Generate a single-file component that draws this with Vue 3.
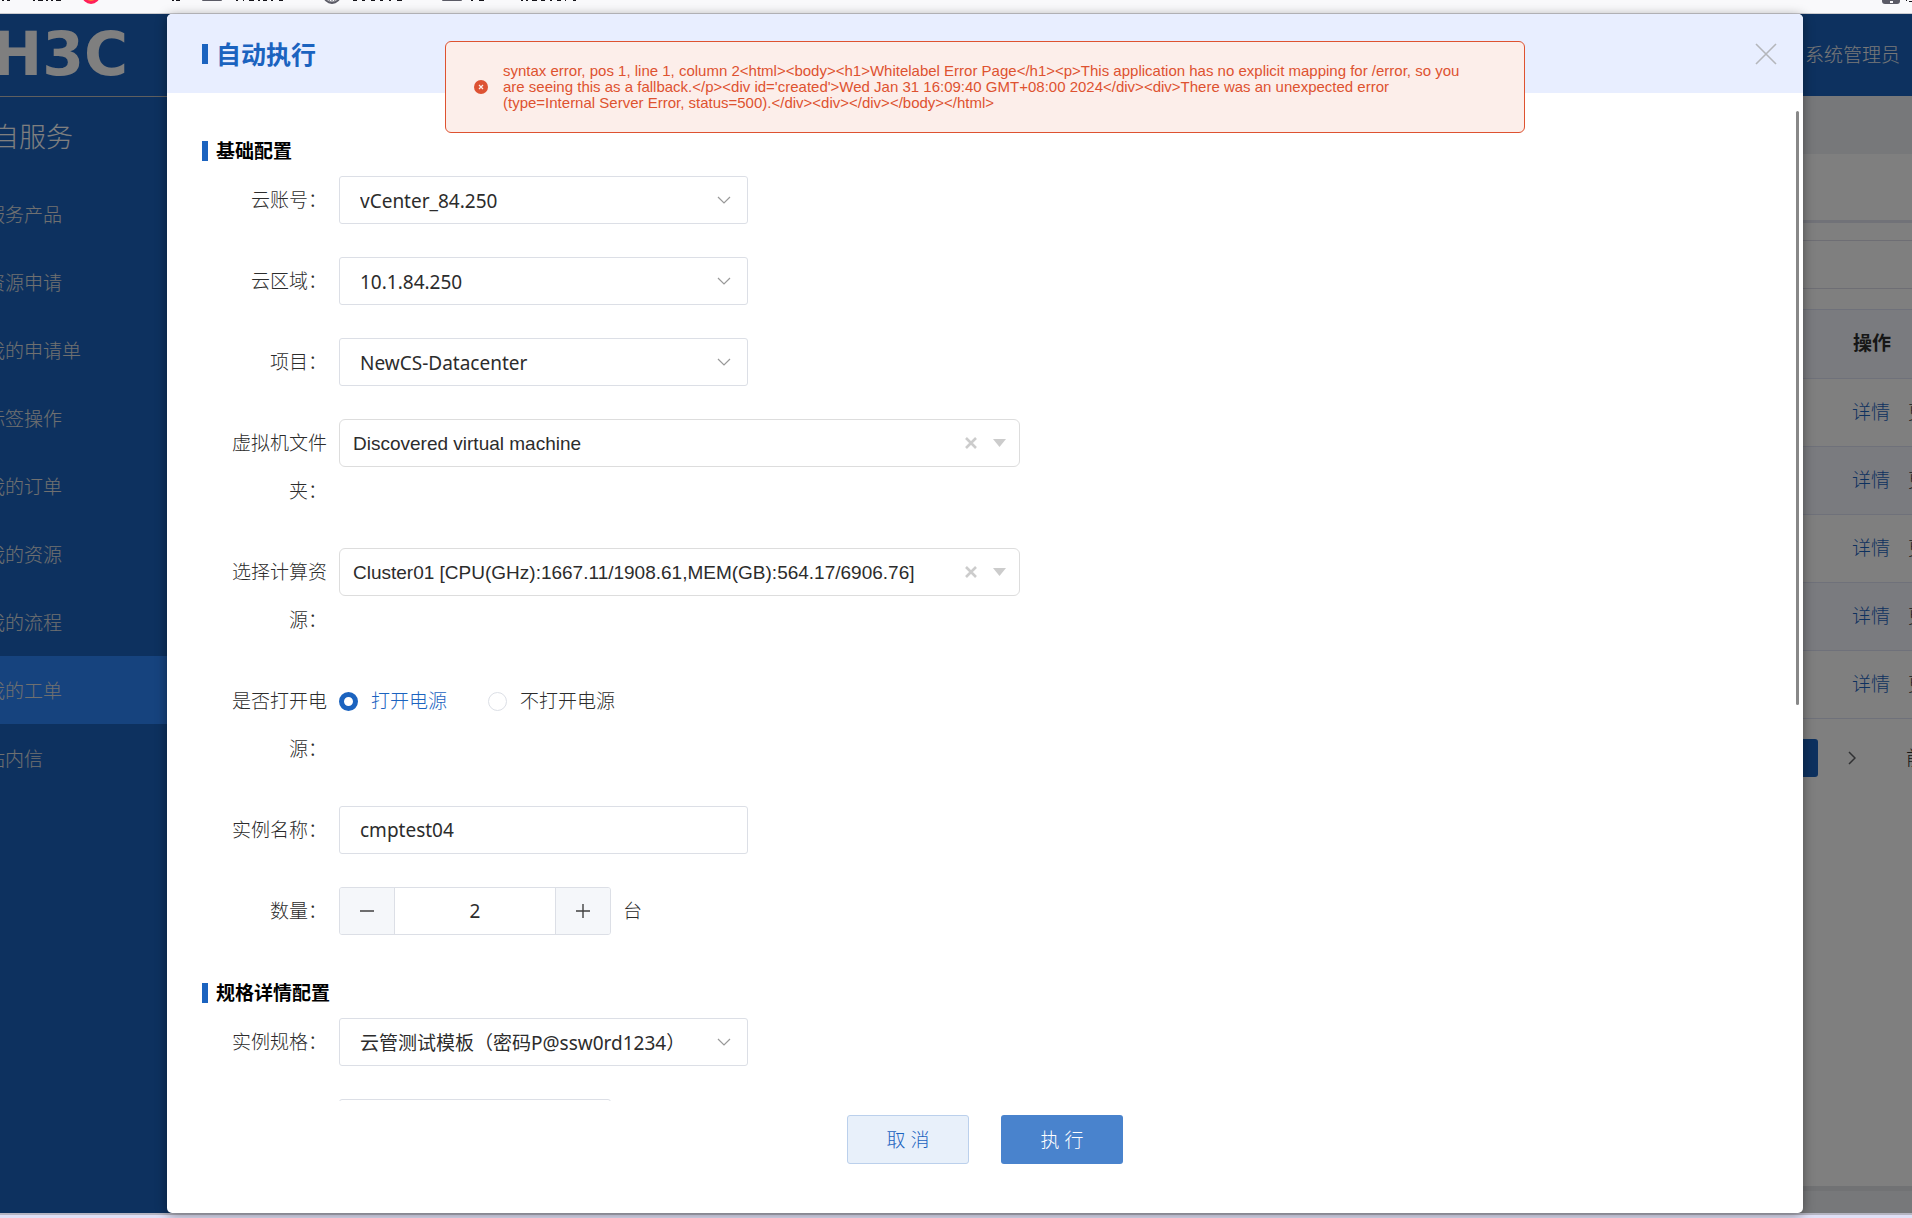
<script setup>
import { ref } from 'vue'

const menu = ['服务产品', '资源申请', '我的申请单', '标签操作', '我的订单', '我的资源', '我的流程', '我的工单', '站内信']
const activeMenu = '我的工单'
const rows = [1, 2, 3, 4, 5]

const cloudSelects = [
  { id: 'account', label: '云账号：', value: 'vCenter_84.250' },
  { id: 'region', label: '云区域：', value: '10.1.84.250' },
  { id: 'project', label: '项目：', value: 'NewCS-Datacenter' },
]
const treeSelects = [
  { id: 'folder', label: '虚拟机文件夹：', value: 'Discovered virtual machine' },
  { id: 'compute', label: '选择计算资源：', value: 'Cluster01 [CPU(GHz):1667.11/1908.61,MEM(GB):564.17/6906.76]' },
]
const spec = '云管测试模板（密码P@ssw0rd1234）'
const power = ref('on')
const name = ref('cmptest04')
const count = ref(2)
const errorText = [
  'syntax error, pos 1, line 1, column 2<html><body><h1>Whitelabel Error Page</h1><p>This application has no explicit mapping for /error, so you',
  "are seeing this as a fallback.</p><div id='created'>Wed Jan 31 16:09:40 GMT+08:00 2024</div><div>There was an unexpected error",
  '(type=Internal Server Error, status=500).</div><div></div></body></html>',
].join('\n')
</script>

<template>
  <div class="screen">
    <div class="bookmarks">
      <svg class="marks" width="600" height="13" viewBox="0 0 600 13" aria-hidden="true">
        <circle cx="91" cy="-5" r="9" fill="#ff1f5a" />
        <circle cx="91" cy="-5" r="6" fill="#ff7a2e" />
        <g fill="#5b5b66">
          <rect x="202" y="-4" width="20" height="5" rx="1" />
          <rect x="442" y="-4" width="20" height="5" rx="1" />
        </g>
        <circle cx="332" cy="-5" r="8" fill="none" stroke="#5b5b66" stroke-width="2" />
        <path d="M332-12V3M328-2Q329 2 332 3Q335 2 336-2M325-1H339" fill="none" stroke="#5b5b66" />
        <path
          d="M2 0.5h2M7 0.5h3M33 0.5h2M38 0.5h5M46 0.5h2M51 0.5h2M56 0.5h5M172 0.5h2M176 0.5h4M236 0.5h2M243 0.5h1M249 0.5h5M258 0.5h2M263 0.5h4M271 0.5h2M279 0.5h4M353 0.5h4M362 0.5h3M371 0.5h4M380 0.5h3M389 0.5h2M397 0.5h5M471 0.5h2M479 0.5h5M521 0.5h2M526 0.5h2M532 0.5h5M541 0.5h4M550 0.5h2M557 0.5h4M565 0.5h1M573 0.5h3"
          stroke="#15141a"
        />
      </svg>
      <svg width="30" height="13" viewBox="0 0 30 13" aria-hidden="true">
        <rect x="0" y="-8" width="18" height="12" rx="3" fill="#5b5b66" />
        <rect x="8" y="1" width="3" height="2" fill="#f9f9fb" />
        <path d="M24 0.5h1M27 1.5h3" stroke="#15141a" />
      </svg>
    </div>

    <div class="viewport">
      <aside class="sidebar">
        <div class="logo">H3C</div>
        <nav>
          <h2>自服务</h2>
          <a v-for="m in menu" :key="m" href="#" :class="{ active: m === activeMenu }">{{ m }}</a>
        </nav>
      </aside>

      <main class="page">
        <header class="topbar">系统管理员</header>
        <div class="crumbs"></div>
        <div class="tabs"></div>
        <div class="gap"></div>
        <div class="filters"></div>
        <div class="gap tall"></div>
        <table class="orders">
          <thead>
            <tr><th>操作</th></tr>
          </thead>
          <tbody>
            <tr v-for="r in rows" :key="r">
              <td><a href="#">详情</a><a href="#" class="more">更多</a></td>
            </tr>
          </tbody>
        </table>
        <div class="pager">
          <button type="button" class="current" aria-label="1"></button>
          <svg width="8" height="14" viewBox="0 0 8 14" aria-hidden="true"><path d="M1 1l6 6-6 6" fill="none" stroke="#606266" stroke-width="1.5" /></svg>
          <span>前往</span>
        </div>
        <div class="page-foot"></div>
      </main>

      <div class="overlay">
        <section class="dialog" role="dialog" aria-labelledby="dialog-title">
          <header class="dialog-head">
            <h1 id="dialog-title">自动执行</h1>
            <button type="button" class="close" aria-label="关闭">
              <svg width="22" height="22" viewBox="0 0 22 22" aria-hidden="true"><path d="M1 1l20 20M21 1L1 21" stroke="#b4b6bb" stroke-width="1.6" /></svg>
            </button>
          </header>

          <form class="dialog-body" @submit.prevent>
            <h3>基础配置</h3>
            <div v-for="f in cloudSelects" :key="f.id" class="row">
              <label :for="f.id">{{ f.label }}</label>
              <div class="field">
                <select :id="f.id"><option>{{ f.value }}</option></select>
                <svg class="arrow" width="14" height="9" viewBox="0 0 14 9" aria-hidden="true"><path d="M1 1l6 6 6-6" fill="none" stroke="#999" stroke-width="1.2" /></svg>
              </div>
            </div>
            <div v-for="f in treeSelects" :key="f.id" class="row">
              <label :for="f.id">{{ f.label }}</label>
              <div class="field wide">
                <select :id="f.id"><option>{{ f.value }}</option></select>
                <div class="tools">
                  <button type="button" aria-label="清除">
                    <svg width="12" height="12" viewBox="0 0 12 12" aria-hidden="true"><path d="M1 1l10 10M11 1L1 11" stroke="#ccc" stroke-width="2.6" /></svg>
                  </button>
                  <svg width="13" height="8" viewBox="0 0 13 8" aria-hidden="true"><path d="M0 0h13L6.500 8z" fill="#ccc" /></svg>
                </div>
              </div>
            </div>
            <div class="row" role="radiogroup" aria-labelledby="power-label">
              <span id="power-label" class="label">是否打开电源：</span>
              <div class="radios">
                <label class="radio"><input v-model="power" type="radio" name="power" value="on" /><span>打开电源</span></label>
                <label class="radio"><input v-model="power" type="radio" name="power" value="off" /><span>不打开电源</span></label>
              </div>
            </div>
            <div class="row">
              <label for="instance">实例名称：</label>
              <div class="field"><input id="instance" v-model="name" type="text" /></div>
            </div>
            <div class="row">
              <label for="count">数量：</label>
              <div class="stepper">
                <button type="button" aria-label="减少" @click="count--">
                  <svg width="14" height="14" viewBox="0 0 14 14" aria-hidden="true"><path d="M0 7h14" stroke="#404040" stroke-width="1.4" /></svg>
                </button>
                <input id="count" v-model="count" type="text" />
                <button type="button" aria-label="增加" @click="count++">
                  <svg width="14" height="14" viewBox="0 0 14 14" aria-hidden="true"><path d="M0 7h14M7 0v14" stroke="#404040" stroke-width="1.4" /></svg>
                </button>
              </div>
              <span class="unit">台</span>
            </div>

            <h3 class="second">规格详情配置</h3>
            <div class="row">
              <label for="spec">实例规格：</label>
              <div class="field">
                <select id="spec"><option>{{ spec }}</option></select>
                <svg class="arrow" width="14" height="9" viewBox="0 0 14 9" aria-hidden="true"><path d="M1 1l6 6 6-6" fill="none" stroke="#999" stroke-width="1.2" /></svg>
              </div>
            </div>
            <div class="row">
              <span class="label"></span>
              <div class="stepper"><input type="text" aria-label="数值" /></div>
            </div>
            <div class="thumb"></div>
          </form>

          <footer class="dialog-foot">
            <button type="button" class="cancel">取 消</button>
            <button type="button" class="run">执 行</button>
          </footer>
        </section>
      </div>

      <div class="alert" role="alert">
        <svg width="14" height="14" viewBox="0 0 14 14" aria-hidden="true">
          <circle cx="7" cy="7" r="7" fill="#dd5233" />
          <path d="M5 5l4 4M9 5L5 9" stroke="#fceeea" stroke-width="1.2" />
        </svg>
        <p>{{ errorText }}</p>
      </div>
    </div>
    <div class="taskbar"></div>
  </div>
</template>

<style>
body {
  overflow: hidden;
}
</style>

<style scoped>
* {
  box-sizing: border-box;
}
.screen {
  display: flex;
  flex-direction: column;
  height: 100vh;
  overflow: hidden;
  font: 300 19px/48px "Noto Sans", "Noto Sans CJK SC", sans-serif;
  color: #2c2c2c;
}
h1, h2, h3, p {
  margin: 0;
}
a {
  text-decoration: none;
}
button, input, select {
  font: inherit;
  color: inherit;
  margin: 0;
  padding: 0;
  border: 0;
  background: none;
}
svg {
  display: block;
  flex: none;
}

.bookmarks {
  display: flex;
  justify-content: space-between;
  flex: none;
  height: 14px;
  background: #f9f9fb;
  border-bottom: 1px solid #ccccd0;
}
.viewport {
  position: relative;
  display: flex;
  flex: 1;
  min-height: 0;
  background: #fff;
}
.taskbar {
  flex: none;
  height: 5px;
  background: #e0e0f6;
  border-top: 2px solid #b5b5c2;
}

/* The page is scrolled sideways, so the sidebar starts left of the window. */
.sidebar {
  flex: none;
  width: 240px;
  margin-left: -40px;
  background: #1b63bf;
  color: #fff;
}
.logo {
  height: 83px;
  padding-left: 32px;
  border-bottom: 1px solid #bebebe;
  font: 700 60px/80px "DejaVu Sans", sans-serif;
}
.sidebar h2 {
  height: 83px;
  padding-left: 32px;
  font-size: 27px;
  font-weight: 300;
  line-height: 80px;
}
.sidebar a {
  display: block;
  height: 68px;
  padding-left: 26px;
  line-height: 70px;
  color: #e0e0e0;
}
.sidebar a.active {
  background: #2c86fc;
}

.page {
  display: flex;
  flex-direction: column;
  flex: 1;
}
.topbar {
  height: 82px;
  padding-right: 12px;
  background: #1b63bf;
  color: #f0f0f0;
  line-height: 82px;
  text-align: right;
}
.crumbs {
  height: 58px;
  background: #eef0f4;
}
.tabs {
  height: 69px;
  border-bottom: 3px solid #e2e4f0;
}
.gap {
  height: 18px;
  border-bottom: 1px solid #dcdce8;
}
.gap.tall {
  height: 20px;
  border: 0;
}
.filters {
  height: 48px;
  border-bottom: 1px solid #dcdce8;
}
.orders {
  width: 100%;
  border-collapse: collapse;
}
.orders th {
  height: 69px;
  padding: 0 21px 2px 0;
  background: #f5f7ff;
  border-top: 1px solid #dfe3f4;
  border-bottom: 1px solid #dfe3f4;
  font-weight: 700;
  text-align: right;
}
.orders td {
  height: 68px;
  padding: 0 1px 2px 0;
  border-bottom: 1px solid #dfe3f4;
  text-align: right;
}
.orders tr:nth-child(even) td {
  background: #f5f7ff;
}
.orders td a {
  color: #1b63bf;
}
.orders td .more {
  margin: 0 -35px 0 18px;
  color: #3c3c3c;
}
.pager {
  display: flex;
  align-items: center;
  justify-content: flex-end;
  height: 78px;
  margin-right: -32px;
}
.pager .current {
  width: 38px;
  height: 38px;
  margin-right: 30px;
  border-radius: 3px;
  background: #1b63bf;
}
.pager span {
  margin-left: 50px;
}
.page-foot {
  height: 27px;
  margin-top: auto;
  border-top: 5px solid #e2e4e8;
  background: #eef0f4;
}

.overlay {
  position: absolute;
  inset: 0;
  display: flex;
  padding: 0 109px 0 167px;
  background: rgba(0, 0, 0, 0.5);
}
.dialog {
  display: flex;
  flex-direction: column;
  flex: 1;
  min-width: 0;
  overflow: hidden;
  border-radius: 5px;
  background: #fff;
  box-shadow: 0 2px 12px rgba(0, 0, 0, 0.4);
}
.dialog-head {
  display: flex;
  align-items: center;
  justify-content: space-between;
  flex: none;
  height: 79px;
  padding: 0 26px 0 35px;
  background: #e8eeff;
}
.dialog-head h1 {
  padding-left: 8px;
  border-left: 6px solid #1b63bf;
  color: #1b63bf;
  font-size: 25px;
  font-weight: 700;
  line-height: 20px;
}
.dialog-body {
  position: relative;
  flex: 1;
  min-height: 0;
  overflow: hidden;
  margin-top: 18px;
  padding: 30px 35px 0;
}
h3 {
  height: 20px;
  margin-bottom: 15px;
  padding-left: 8px;
  border-left: 6px solid #1b63bf;
  color: #000;
  font-size: 19px;
  font-weight: 700;
  line-height: 20px;
}
h3.second {
  margin-top: 48px;
}
.row {
  display: flex;
  align-items: flex-start;
  margin-bottom: 33px;
}
.row:has(+ h3) {
  margin-bottom: 0;
}
.row > label,
.label {
  flex: none;
  width: 137px;
  padding-right: 12px;
  text-align: right;
}
.field {
  position: relative;
  width: 409px;
}
.field select,
.field input {
  display: block;
  width: 100%;
  height: 48px;
  padding: 0 20px;
  border: 1px solid #dcdfe6;
  border-radius: 3px;
  background: #fff;
  appearance: none;
  font-weight: 400;
}
.arrow {
  position: absolute;
  right: 17px;
  top: 20px;
}
.field.wide {
  width: 681px;
}
.field.wide select {
  padding: 0 13px 2px;
  border-color: #ddd;
  border-radius: 6px;
  font-family: "Liberation Sans", Arial, sans-serif;
}
.tools {
  position: absolute;
  right: 14px;
  top: 0;
  display: flex;
  align-items: center;
  gap: 16px;
  height: 48px;
}
.radios {
  display: flex;
  gap: 41px;
}
.radio {
  display: flex;
  align-items: center;
  gap: 13px;
}
.radio input {
  width: 19px;
  height: 19px;
  border: 1px solid #dcdfe6;
  border-radius: 50%;
  background: #fff;
  appearance: none;
}
.radio input:checked {
  border: 5px solid #1b63bf;
}
.radio input:checked + span {
  color: #1b63bf;
}
.stepper {
  display: flex;
  width: 272px;
  height: 48px;
  overflow: hidden;
  border: 1px solid #dcdfe6;
  border-radius: 3px;
}
.stepper button {
  display: flex;
  align-items: center;
  justify-content: center;
  flex: none;
  width: 54px;
  background: #f5f7fa;
}
.stepper input {
  flex: 1;
  min-width: 0;
  border: 0 solid #dcdfe6;
  font-weight: 400;
  text-align: center;
}
.stepper button + input {
  border-width: 0 1px;
}
.unit {
  margin-left: 12px;
}
.thumb {
  position: absolute;
  right: 4px;
  top: 0;
  width: 3px;
  height: 60%;
  border-radius: 2px;
  background: #888;
}
.dialog-foot {
  display: flex;
  justify-content: center;
  gap: 32px;
  flex: none;
  padding: 14px 0 49px;
}
.dialog-foot button {
  width: 122px;
  height: 49px;
  border-radius: 3px;
}
.cancel {
  border: 1px solid #bbd0ec;
  background: #e8f0fa;
  color: #1b63bf;
}
.run {
  background: #4983cd;
  color: #fff;
}

.alert {
  position: absolute;
  top: 27px;
  left: 445px;
  right: 387px;
  display: flex;
  align-items: center;
  gap: 15px;
  height: 92px;
  padding: 0 28px;
  border: 1px solid #de5230;
  border-radius: 6px;
  background: #fceeea;
  color: #de5230;
  font: 400 15px/16px "Liberation Sans", Arial, sans-serif;
  white-space: pre-line;
}
</style>
